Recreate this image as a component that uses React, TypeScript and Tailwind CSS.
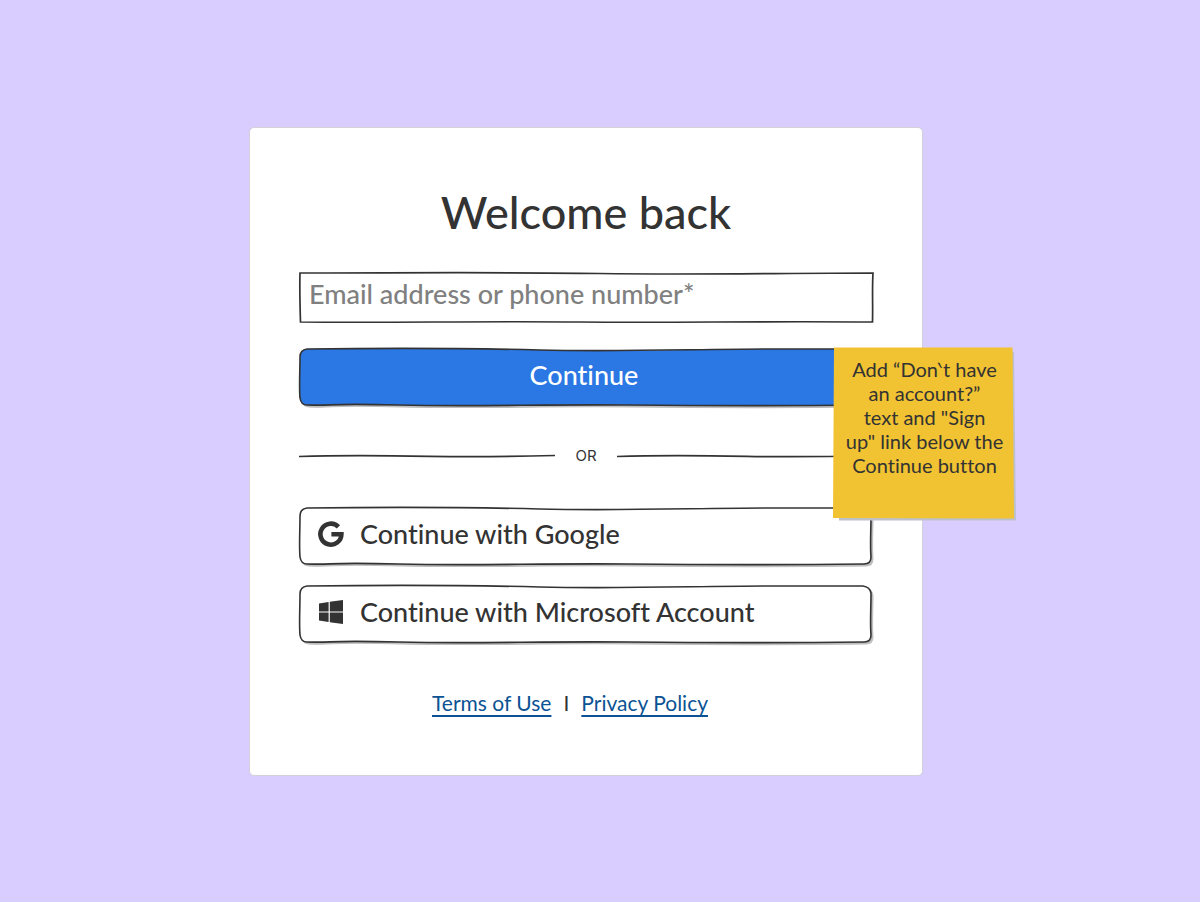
import React from 'react';

const OUTLINE =
  'M8 1 C90 0 160 0 240 2 S400 1 470 1 S540 1 563 1 Q570 2 571 8 C571 24 570 38 571 50 Q571 57 564 57 C480 58 420 58 330 57 S180 59 100 57 S40 58 8 57 Q2 57 1 50 C0 38 1 24 1 9 Q1 2 8 1 Z';

// Hand drawn frame for the buttons, with the soft shadow under it
const SketchOutline = ({ fill = '#ffffff' }: { fill?: string }) => (
  <svg
    className="absolute inset-0 h-full w-full overflow-visible"
    viewBox="0 0 573 58"
    preserveAspectRatio="none"
    aria-hidden="true"
  >
    <path d={OUTLINE} fill="#bdbdbd" stroke="#bdbdbd" transform="translate(2 2)" />
    <path d={OUTLINE} fill={fill} stroke="#333333" strokeWidth="1.6" />
  </svg>
);

const SketchLine = () => (
  <svg className="h-1 min-w-0 flex-1" viewBox="0 0 256 4" preserveAspectRatio="none" aria-hidden="true">
    <path d="M0 2.5 C40 1 90 1.5 130 2.3 S200 3 256 1.5" fill="none" stroke="#333333" strokeWidth="1.7" />
  </svg>
);

const GoogleIcon = () => (
  <svg className="h-[26px] w-[26px]" viewBox="0 0 26 26" fill="none" aria-hidden="true">
    <path d="M20.400 5.800 A10.500 10.500 0 1 0 23.400 13.200 H13.400" stroke="#333333" strokeWidth="4.600" />
  </svg>
);

const WindowsIcon = () => (
  <svg className="h-6 w-[26px]" viewBox="0 0 26 24" fill="#333333" aria-hidden="true">
    <path d="M1 3.4 10.6 2V11.4H1zM11.8 1.8 25 0V11.4H11.8zM1 12.6H10.6V22L1 20.6zM11.8 12.6H25V24L11.8 22.2z" />
  </svg>
);

const ProviderButton = ({ icon, label }: { icon: React.ReactNode; label: string }) => (
  <button type="button" className="relative h-[58px] w-full cursor-pointer text-left">
    <SketchOutline />
    <span className="relative flex items-center gap-4 pb-1 pl-[19px] text-[27px] font-medium leading-8">
      {icon}
      {label}
    </span>
  </button>
);

const StickyNote = () => (
  <aside className="absolute -right-[94px] top-[219px] h-[174px] w-[183px]">
    <svg
      className="absolute inset-0 h-full w-full"
      viewBox="0 0 183 174"
      preserveAspectRatio="none"
      aria-hidden="true"
    >
      <path d="M6 5H181L183 173.500H6z" fill="#bdc1cc" />
      <path d="M1 0.500H179.500L181 171.500 0 171z" fill="#f1c232" />
    </svg>
    <p className="relative px-2 pt-[10px] text-center text-[20px] leading-6">
      Add “Don‵t have
      <br />
      an account?”
      <br />
      text and "Sign
      <br />
      up" link below the
      <br />
      Continue button
    </p>
  </aside>
);

const App = () => (
  <main className="flex min-h-screen items-center justify-center bg-[#d9ccff] pr-7 font-[Lato,sans-serif] text-[#333333] [font-variant-ligatures:none]">
    <section className="relative w-full max-w-[674px] rounded-[5px] border border-[#d3d0d8] bg-white px-[49px] py-[60px]">
      <h1 className="text-center text-[45px] font-medium leading-[48px]">Welcome back</h1>
      <form onSubmit={(e) => e.preventDefault()}>
        <div className="relative mt-9 h-[51px]">
          <svg
            className="absolute inset-0 h-full w-full overflow-visible"
            viewBox="0 0 574 51"
            preserveAspectRatio="none"
            aria-hidden="true"
          >
            <path
              d="M1 1 C100 1 200 0 300 1.500 S480 1 574 1 C573 18 574 34 573.500 50 C450 49 380 51 280 50 S90 51 1.500 50 C1 34 0.500 17 1 1 Z"
              fill="none"
              stroke="#333333"
              strokeWidth="1.7"
            />
          </svg>
          <input
            type="text"
            aria-label="Email address or phone number"
            placeholder="Email address or phone number*"
            className="relative h-full w-full bg-transparent pb-2 pl-[10px] pr-2 text-[27px] font-medium outline-none placeholder:text-[#808080]"
          />
        </div>
        <button type="submit" className="relative mt-[25px] block h-[58px] w-full cursor-pointer text-white">
          <SketchOutline fill="#2b78e4" />
          <span className="relative block pb-1 pr-1 text-[27px] font-medium leading-8">Continue</span>
        </button>
      </form>
      <div className="mt-10 flex items-center gap-5">
        <SketchLine />
        <span className="font-[Inter,sans-serif] text-[15px] leading-5">OR</span>
        <SketchLine />
      </div>
      <div className="mt-[41px] flex flex-col gap-5">
        <ProviderButton icon={<GoogleIcon />} label="Continue with Google" />
        <ProviderButton icon={<WindowsIcon />} label="Continue with Microsoft Account" />
      </div>
      <nav className="mt-12 flex justify-center gap-3 pr-8 text-[21px] leading-6">
        <a href="#terms" className="text-[#0b5394] underline decoration-2 underline-offset-4">
          Terms of Use
        </a>
        <span>I</span>
        <a href="#privacy" className="text-[#0b5394] underline decoration-2 underline-offset-4">
          Privacy Policy
        </a>
      </nav>
      <StickyNote />
    </section>
  </main>
);

export default App;
